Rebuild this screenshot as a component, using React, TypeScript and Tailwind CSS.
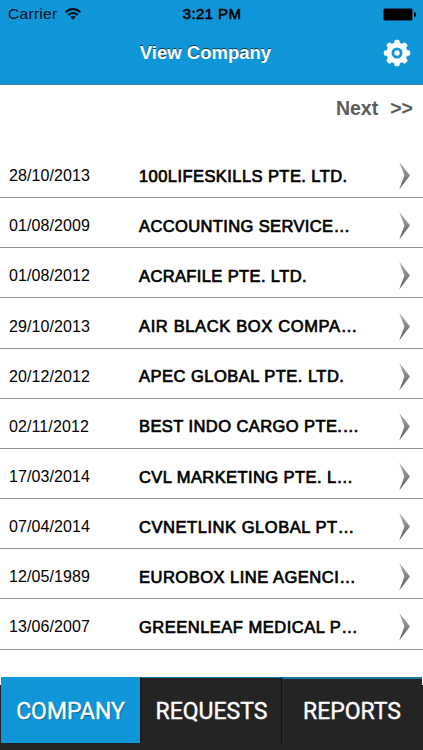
interface Company {
  date: string;
  name: string;
  spacing: string;
}

const companies: Company[] = [
  { date: '28/10/2013', name: '100LIFESKILLS PTE. LTD.', spacing: 'tracking-[0.43px]' },
  { date: '01/08/2009', name: 'ACCOUNTING SERVICE…', spacing: 'tracking-[0.38px]' },
  { date: '01/08/2012', name: 'ACRAFILE PTE. LTD.', spacing: 'tracking-[0.38px]' },
  { date: '29/10/2013', name: 'AIR BLACK BOX COMPA…', spacing: 'tracking-[0.64px]' },
  { date: '20/12/2012', name: 'APEC GLOBAL PTE. LTD.', spacing: 'tracking-[0.48px]' },
  { date: '02/11/2012', name: 'BEST INDO CARGO PTE.…', spacing: 'tracking-[0.42px]' },
  { date: '17/03/2014', name: 'CVL MARKETING PTE. L…', spacing: 'tracking-[0.42px]' },
  { date: '07/04/2014', name: 'CVNETLINK GLOBAL PT…', spacing: 'tracking-[0.55px]' },
  { date: '12/05/1989', name: 'EUROBOX LINE AGENCI…', spacing: 'tracking-[0.5px]' },
  { date: '13/06/2007', name: 'GREENLEAF MEDICAL P…', spacing: 'tracking-[0.5px]' },
];

const teeth = [0, 45, 90, 135, 180, 225, 270, 315];

function WifiIcon() {
  return (
    <svg viewBox="0 0 16 12" className="h-3 w-4" fill="none" stroke="#04121b" strokeWidth="2.1">
      <path d="M0.7 4.2 C4.8 0.1 11.2 0.1 15.3 4.2" />
      <path d="M3.3 7 C6 4.4 10 4.4 12.7 7" />
      <path d="M5.4 9 Q8 6.7 10.6 9 L8 11.7 Z" fill="#04121b" stroke="none" />
    </svg>
  );
}

function GearIcon() {
  return (
    <svg viewBox="0 0 28 28" className="h-7 w-7" fill="white">
      {teeth.map((angle) => (
        <rect key={angle} x="11.3" y="0.8" width="5.4" height="7" rx="1.8" transform={`rotate(${angle} 14 14)`} />
      ))}
      <circle cx="14" cy="14" r="8" fill="none" stroke="white" strokeWidth="5" />
      <circle cx="14" cy="14" r="2.7" />
    </svg>
  );
}

function Chevron() {
  return (
    <svg viewBox="0 0 12 30" className="h-[30px] w-3">
      <defs>
        <linearGradient id="chevron" x1="0" y1="0" x2="0" y2="1">
          <stop offset="0" stopColor="#b0b0b0" />
          <stop offset="0.5" stopColor="#858585" />
          <stop offset="1" stopColor="#555" />
        </linearGradient>
      </defs>
      <path d="M0.2 0.8 L11 14.5 L0.2 28.6 L5.4 14.5 Z" fill="url(#chevron)" />
    </svg>
  );
}

export default function App() {
  return (
    <main className="flex h-[750px] w-[423px] flex-col overflow-hidden bg-white font-['Liberation_Sans',sans-serif] text-black">
      <header className="h-[85px] border-b border-[#4585ad] bg-[#0f96d9]">
        <div className="grid h-[28px] grid-cols-3 items-center pl-2 pr-[7px] text-[15px]">
          <div className="flex items-center gap-2 text-[#04121b]">
            <span className="text-[15.5px] tracking-[0.3px]">Carrier</span>
            <WifiIcon />
          </div>
          <span className="text-center tracking-[0.4px] [-webkit-text-stroke:0.6px_black]">3:21 PM</span>
          <div className="flex items-center justify-end gap-px">
            <div className="h-[13px] w-[30px] rounded-[2px] border border-[#07507a] bg-[#07507a]">
              <div className="h-full rounded-[1px] bg-black" />
            </div>
            <div className="h-[5px] w-[2px] rounded-r-full bg-black" />
          </div>
        </div>
        <div className="grid h-[50px] grid-cols-[1fr_auto_1fr] items-center pr-3">
          <span />
          <h1 className="text-[18.5px] font-bold text-white [text-shadow:0_-1px_0_#063b55]">View Company</h1>
          <button className="justify-self-end" aria-label="Settings">
            <GearIcon />
          </button>
        </div>
      </header>

      <div className="flex h-[63px] justify-end gap-3 pr-[10px] pt-[9px] text-[19.5px] leading-7 font-bold text-[#5c5c5c]">
        <span>Next</span>
        <span>&gt;&gt;</span>
      </div>

      <ul className="h-[529px] shrink-0">
        {companies.map((company) => (
          <li key={company.date} className="flex h-[50.17px] items-center border-b border-[#929292] pl-[9px] pr-3 pt-[7px]">
            <span className="w-[130px] text-[16px] tracking-[0.1px]">{company.date}</span>
            <span className={`flex-1 whitespace-nowrap text-[16.5px] [-webkit-text-stroke:0.7px_black] ${company.spacing}`}>
              {company.name}
            </span>
            <Chevron />
          </li>
        ))}
      </ul>

      <nav className="h-[73px] shrink-0 bg-[linear-gradient(#fff_8px,#222_8px)] px-px">
        <div className="grid h-full grid-cols-[139px_142px_140px] bg-[#242424] font-['Roboto',sans-serif] text-[23px] text-white [-webkit-text-stroke:0.4px_white]">
          <button className="mb-[7px] bg-[#0f96d9] pt-1 [text-shadow:1px_1px_1px_#075b88]">COMPANY</button>
          <button className="mb-[7px] border-t border-l-2 border-r border-t-[#167ba7] border-l-[#171717] border-r-[#111] pt-[3px]">REQUESTS</button>
          <button className="mb-[7px] border-t-2 border-[#16779f] pt-[2px]">REPORTS</button>
        </div>
      </nav>
    </main>
  );
}
